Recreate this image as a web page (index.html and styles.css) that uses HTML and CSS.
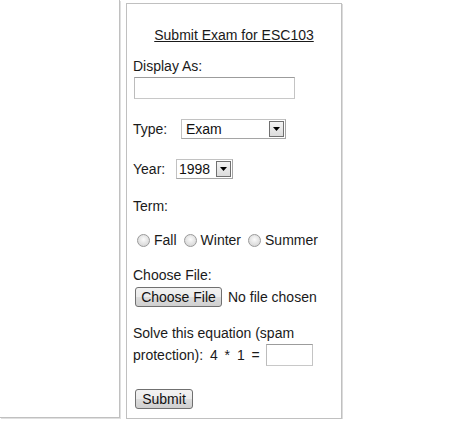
FILE: index.html
```html
<!DOCTYPE html>
<html>
<head>
<meta charset="utf-8">
<link rel="stylesheet" href="styles.css">
</head>
<body>
<div class="page">
  <div class="side"></div>
  <div class="panel">
    <h1 class="title">Submit Exam for ESC103</h1>
    <div class="label">Display As:</div>
    <div class="field"><input class="text" type="text"></div>
    <div class="row type-row">
      <span class="lbl">Type:</span>
      <span class="select sel-type"><span class="val">Exam</span><span class="arrow"><svg width="7" height="4" viewBox="0 0 7 4"><path d="M0 0h7L3.5 4z" fill="#000"/></svg></span></span>
    </div>
    <div class="row year-row">
      <span class="lbl">Year:</span>
      <span class="select sel-year"><span class="val">1998</span><span class="arrow"><svg width="7" height="4" viewBox="0 0 7 4"><path d="M0 0h7L3.5 4z" fill="#000"/></svg></span></span>
    </div>
    <div class="label term">Term:</div>
    <div class="radios">
      <span class="radio"></span><span class="rlbl">Fall</span>
      <span class="radio"></span><span class="rlbl">Winter</span>
      <span class="radio"></span><span class="rlbl">Summer</span>
    </div>
    <div class="label choose">Choose File:</div>
    <div class="file-row"><button class="btn file-btn" type="button">Choose File</button><span class="nofile">No file chosen</span></div>
    <div class="solve">Solve this equation (spam<br><span class="eq">protection): 4 * 1 =</span><input class="text small" type="text"></div>
    <div class="submit-row"><button class="btn" type="button">Submit</button></div>
  </div>
</div>
</body>
</html>
```

FILE: styles.css
```css
html, body {
  margin: 0;
  padding: 0;
  background: #fff;
}
body {
  font-family: "Liberation Sans", Arial, sans-serif;
  font-size: 14px;
  color: #1a1a1a;
}
.page {
  display: flex;
  align-items: flex-start;
}
.side {
  width: 119px;
  height: 417px;
  border-right: 1px solid #c0c0c0;
  border-bottom: 1px solid #c0c0c0;
  box-shadow: 1px 1px 0 #e0e0e0;
}
.panel {
  margin-left: 6px;
  margin-top: 3px;
  width: 208px;
  height: 414px;
  border: 1px solid #c0c0c0;
  box-shadow: 1px 1px 0 #dcdcdc;
  padding: 0 0 0 6px;
  box-sizing: content-box;
}
.title {
  margin: 0;
  padding-top: 22px;
  font-size: 14px;
  font-weight: normal;
  text-align: center;
  text-decoration: underline;
  line-height: 18px;
  padding-right: 6px;
}
.label {
  line-height: 18px;
}
.title + .label {
  margin-top: 13px;
}
.field {
  margin-top: 2px;
  padding-left: 1px;
}
.text {
  display: block;
  width: 161px;
  height: 22px;
  box-sizing: border-box;
  border: 1px solid #a9a9a9;
  border-color: #9c9c9c #c4c4c4 #c8c8c8 #bcbcbc;
  margin: 0;
  padding: 0;
  background: #fff;
}
.row {
  display: flex;
  align-items: center;
  height: 20px;
}
.type-row {
  margin-top: 20px;
}
.year-row {
  margin-top: 20px;
}
.lbl {
  line-height: 18px;
}
.type-row .lbl { width: 48px; }
.year-row .lbl { width: 43px; }
.select {
  display: flex;
  height: 20px;
  box-sizing: border-box;
  border: 1px solid #a5a5a5;
  border-color: #c2c2c2 #a5a5a5 #a5a5a5 #c2c2c2;
  background: #fff;
  align-items: stretch;
}
.sel-type { width: 105px; }
.sel-year { width: 57px; }
.val {
  flex: 1;
  padding-left: 4px;
  line-height: 18px;
  color: #111;
}
.sel-year .val { padding-left: 2px; }
.arrow {
  width: 15px;
  margin: 1px;
  border: 1px solid #707070;
  background: linear-gradient(#f4f4f4, #dcdcdc);
  display: flex;
  align-items: center;
  justify-content: center;
  box-sizing: border-box;
}
.label.term {
  margin-top: 18px;
}
.radios {
  display: flex;
  align-items: center;
  margin-top: 16px;
  padding-left: 4px;
  height: 18px;
}
.radio {
  width: 11px;
  height: 11px;
  border-radius: 50%;
  border: 1px solid #9a9a9a;
  background: radial-gradient(circle at 50% 40%, #fbfbfb 0, #e2e2e2 55%, #cfcfcf 100%);
  margin-right: 4px;
}
.rlbl {
  margin-right: 7px;
  line-height: 18px;
}
.label.choose {
  margin-top: 17px;
}
.file-row {
  display: flex;
  align-items: center;
  margin-top: 3px;
  padding-left: 2px;
}
.btn {
  font-family: "Liberation Sans", Arial, sans-serif;
  font-size: 14px;
  color: #111;
  height: 20px;
  padding: 0 6px;
  border: 1px solid #707070;
  border-radius: 3px;
  background: linear-gradient(#f2f2f2 0, #ebebeb 50%, #dddddd 51%, #cfcfcf 100%);
  line-height: 18px;
  margin: 0;
}
.file-btn {
  width: 87px;
  padding: 0;
}
.nofile {
  margin-left: 6px;
  line-height: 18px;
}
.solve {
  margin-top: 15px;
  line-height: 22px;
}
.eq {
  word-spacing: 3px;
}
.text.small {
  display: inline-block;
  width: 47px;
  vertical-align: middle;
  margin-top: -3px;
  margin-left: 6px;
}
.submit-row {
  margin-top: 23px;
  padding-left: 2px;
}
.submit-row .btn {
  width: 58px;
  padding: 0;
}
```
